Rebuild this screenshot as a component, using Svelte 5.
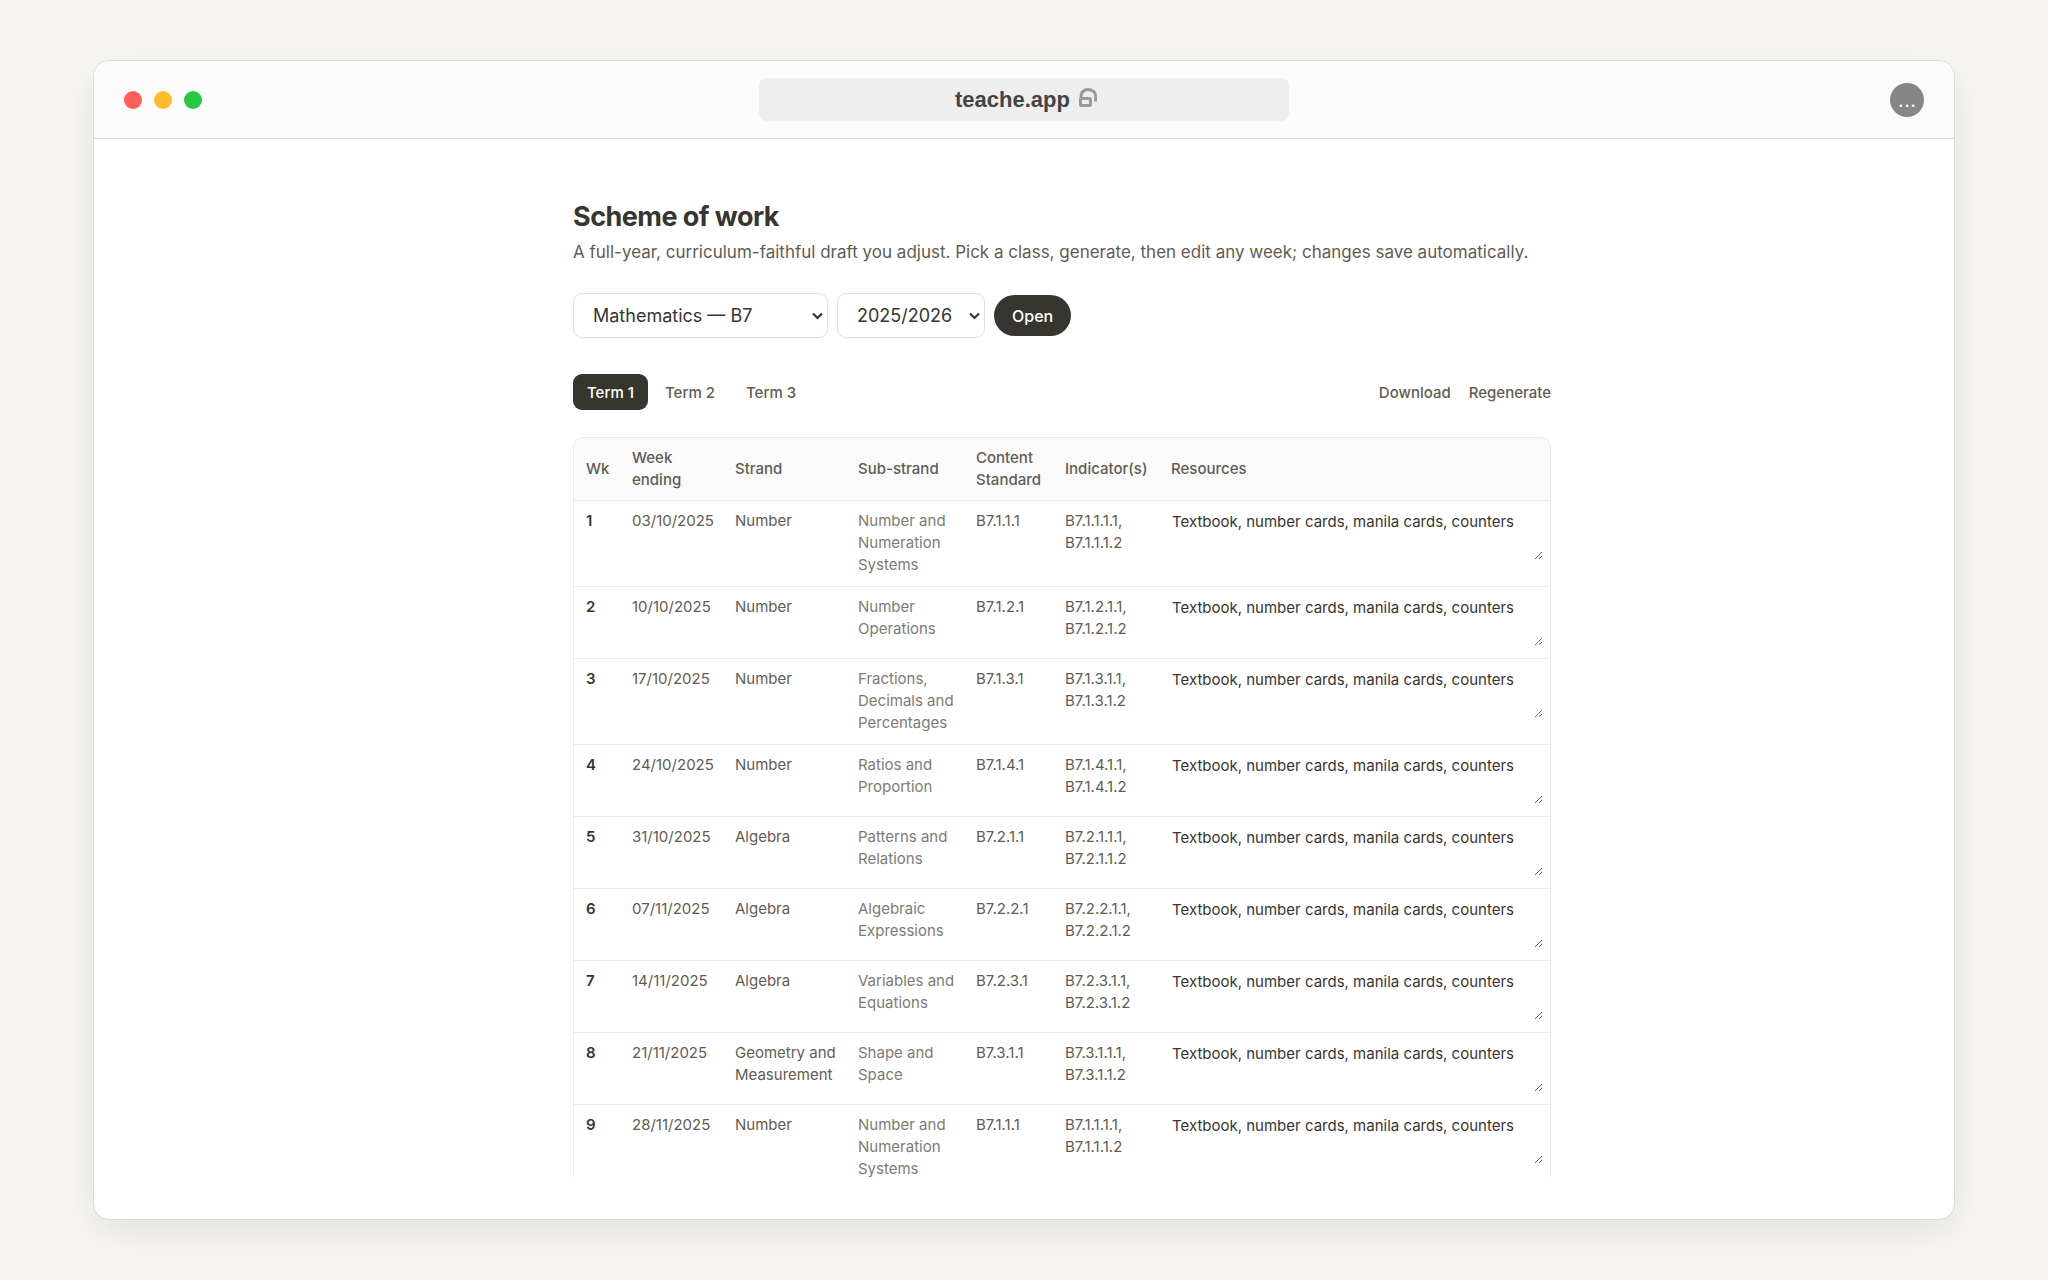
<script>
    const terms = ["Term 1", "Term 2", "Term 3"];
    const resources = "Textbook, number cards, manila cards, counters";

    let subject = $state("Mathematics — B7");
    let year = $state("2025/2026");
    let term = $state("Term 1");

    let weeks = $state([
        { ending: "03/10/2025", strand: "Number", sub: "Number and Numeration Systems", code: "B7.1.1.1", resources },
        { ending: "10/10/2025", strand: "Number", sub: "Number Operations", code: "B7.1.2.1", resources },
        { ending: "17/10/2025", strand: "Number", sub: "Fractions, Decimals and Percentages", code: "B7.1.3.1", resources },
        { ending: "24/10/2025", strand: "Number", sub: "Ratios and Proportion", code: "B7.1.4.1", resources },
        { ending: "31/10/2025", strand: "Algebra", sub: "Patterns and Relations", code: "B7.2.1.1", resources },
        { ending: "07/11/2025", strand: "Algebra", sub: "Algebraic Expressions", code: "B7.2.2.1", resources },
        { ending: "14/11/2025", strand: "Algebra", sub: "Variables and Equations", code: "B7.2.3.1", resources },
        { ending: "21/11/2025", strand: "Geometry and Measurement", sub: "Shape and Space", code: "B7.3.1.1", resources },
        { ending: "28/11/2025", strand: "Number", sub: "Number and Numeration Systems", code: "B7.1.1.1", resources }
    ]);
</script>

<div class="stage">
    <div class="window">
        <!-- browser bar -->
        <header class="bar">
            <div class="dots">
                <span class="dot red"></span>
                <span class="dot yellow"></span>
                <span class="dot green"></span>
            </div>
            <div class="address">
                <span>teache.app</span>
                <svg class="lock" viewBox="0 0 18 20" aria-hidden="true">
                    <path d="M1.8 11C1.8 4 4.5 1.5 9 1.5S16.6 4.5 16.6 8V13.5" />
                    <rect x="1.5" y="10.5" width="10" height="7" rx="1" />
                </svg>
            </div>
            <button class="more" aria-label="More">...</button>
        </header>

        <div class="viewport">
            <main>
                <h1>Scheme of work</h1>
                <p class="intro">A full-year, curriculum-faithful draft you adjust. Pick a class, generate, then edit any week; changes save automatically.</p>

                <form class="picker" onsubmit={(e) => e.preventDefault()}>
                    <select class="subject" aria-label="Class" bind:value={subject}>
                        <option>Mathematics — B7</option>
                    </select>
                    <select class="year" aria-label="Year" bind:value={year}>
                        <option>2025/2026</option>
                    </select>
                    <button class="open">Open</button>
                </form>

                <div class="toolbar">
                    <div class="tabs">
                        {#each terms as name}
                            <button class="tab" class:active={term === name} onclick={() => (term = name)}>{name}</button>
                        {/each}
                    </div>
                    <div class="actions">
                        <button>Download</button>
                        <button>Regenerate</button>
                    </div>
                </div>

                <div class="sheet">
                    <table>
                        <colgroup>
                            <col class="c-wk" />
                            <col class="c-ending" />
                            <col class="c-strand" />
                            <col class="c-sub" />
                            <col class="c-standard" />
                            <col class="c-indicator" />
                            <col />
                        </colgroup>
                        <thead>
                            <tr>
                                <th>Wk</th>
                                <th>Week ending</th>
                                <th>Strand</th>
                                <th>Sub-strand</th>
                                <th>Content Standard</th>
                                <th>Indicator(s)</th>
                                <th>Resources</th>
                            </tr>
                        </thead>
                        <tbody>
                            {#each weeks as week, i}
                                <tr>
                                    <td class="num">{i + 1}</td>
                                    <td>{week.ending}</td>
                                    <td>{week.strand}</td>
                                    <td class="muted">{week.sub}</td>
                                    <td>{week.code}</td>
                                    <td>{week.code}.1, {week.code}.2</td>
                                    <td class="edit">
                                        <textarea rows="2" aria-label={`Resources for week ${i + 1}`} bind:value={week.resources}></textarea>
                                    </td>
                                </tr>
                            {/each}
                        </tbody>
                    </table>
                </div>
            </main>
        </div>
    </div>
</div>

<style>
    :global(body) {
        background: #f6f5f1;
    }

    .stage {
        box-sizing: border-box;
        height: 100vh;
        padding: 60px 93px;
        font-family: Inter, "Liberation Sans", sans-serif;
        color: #37352f;
    }

    .window {
        box-sizing: border-box;
        height: 100%;
        display: flex;
        flex-direction: column;
        background: #fff;
        border: 1px solid #dadad8;
        border-radius: 16px;
        box-shadow: 0 12px 40px rgba(0, 0, 0, 0.08);
        overflow: hidden;
    }

    /* browser bar */
    .bar {
        display: grid;
        grid-template-columns: 1fr 530px 1fr;
        align-items: center;
        padding: 17px 30px;
        background: #fbfbfb;
        border-bottom: 1px solid #dedede;
    }

    .dots {
        display: flex;
        gap: 12px;
    }

    .dot {
        width: 18px;
        height: 18px;
        border-radius: 50%;
    }

    .red {
        background: #ff5f57;
    }

    .yellow {
        background: #febc2e;
    }

    .green {
        background: #28c840;
    }

    .address {
        box-sizing: border-box;
        display: flex;
        align-items: center;
        justify-content: center;
        gap: 9px;
        height: 43px;
        padding-left: 4px;
        border-radius: 8px;
        background: #eee;
        color: #444;
        font: bold 22px "Liberation Sans", sans-serif;
    }

    .lock {
        width: 18px;
        height: 20px;
        margin-bottom: 3px;
        fill: none;
        stroke: #9b9a95;
        stroke-width: 3;
    }

    .more {
        justify-self: end;
        width: 34px;
        height: 34px;
        padding: 0;
        border: 0;
        border-radius: 50%;
        background: #868686;
        color: #fff;
        font: 22px "Liberation Sans", sans-serif;
    }

    /* page */
    .viewport {
        flex: 1;
        min-height: 0;
        margin-bottom: 42px;
        padding: 60px 0 0 76px;
        overflow: hidden;
    }

    main {
        max-width: 978px;
        margin: 0 auto;
    }

    h1 {
        margin: 0;
        font-size: 27px;
        line-height: 36px;
        font-weight: 700;
        letter-spacing: -0.02em;
    }

    .intro {
        margin: 4px 0 0;
        font-size: 17px;
        line-height: 26px;
        color: #5f5c53;
    }

    button,
    select,
    textarea {
        font-family: inherit;
    }

    .picker {
        display: flex;
        align-items: center;
        gap: 9px;
        margin-top: 28px;
    }

    select {
        box-sizing: border-box;
        height: 45px;
        padding: 0 20px 0 19px;
        border: 1px solid #e0e0de;
        border-radius: 9px;
        background: #fff url("data:image/svg+xml,%3Csvg xmlns='http://www.w3.org/2000/svg' viewBox='0 0 11 8'%3E%3Cpath d='M1 1.5l4.5 4.5L10 1.5' fill='none' stroke='%2337352f' stroke-width='2.2'/%3E%3C/svg%3E") no-repeat right 4px center / 11px 8px;
        color: #37352f;
        font-size: 18px;
        appearance: none;
    }

    .subject {
        width: 255px;
    }

    .year {
        width: 148px;
    }

    .open {
        height: 41px;
        padding: 0 18px;
        border: 0;
        border-radius: 21px;
        background: #37352f;
        color: #fff;
        font-size: 16px;
        font-weight: 500;
    }

    .toolbar {
        display: flex;
        align-items: center;
        justify-content: space-between;
        margin-top: 36px;
    }

    .tabs {
        display: flex;
        gap: 3px;
    }

    .tab {
        height: 36px;
        padding: 0 14px;
        border: 0;
        border-radius: 9px;
        background: none;
        color: #5f5c53;
        font-size: 15px;
        font-weight: 500;
    }

    .tab.active {
        background: #37352f;
        color: #fff;
    }

    .actions {
        display: flex;
        gap: 18px;
    }

    .actions button {
        padding: 0;
        border: 0;
        background: none;
        color: #5f5c53;
        font-size: 15px;
        font-weight: 500;
    }

    /* weeks table */
    .sheet {
        margin-top: 27px;
        border: 1px solid #ebebea;
        border-radius: 10px;
        overflow: hidden;
    }

    table {
        width: 100%;
        table-layout: fixed;
        border-spacing: 0;
        font-size: 15px;
        line-height: 22px;
    }

    .c-wk {
        width: 46px;
    }

    .c-ending {
        width: 103px;
    }

    .c-strand {
        width: 123px;
    }

    .c-sub {
        width: 118px;
    }

    .c-standard {
        width: 89px;
    }

    .c-indicator {
        width: 106px;
    }

    th,
    td {
        padding: 9px 8px 10px 12px;
        border-bottom: 1px solid #ebebea;
        text-align: left;
        color: #5f5c53;
    }

    th {
        padding-bottom: 9px;
        background: #fafafa;
        font-weight: 500;
    }

    td {
        vertical-align: top;
    }

    .num {
        color: #37352f;
        font-weight: 600;
    }

    .muted {
        color: #7d7b74;
    }

    .edit {
        padding: 4px 6px 11px;
    }

    textarea {
        display: block;
        box-sizing: border-box;
        width: 100%;
        height: 56px;
        padding: 5px 6px;
        border: 1px solid transparent;
        border-radius: 6px;
        background: none;
        color: #37352f;
        font-size: 15px;
        line-height: 22px;
        resize: vertical;
    }
</style>
